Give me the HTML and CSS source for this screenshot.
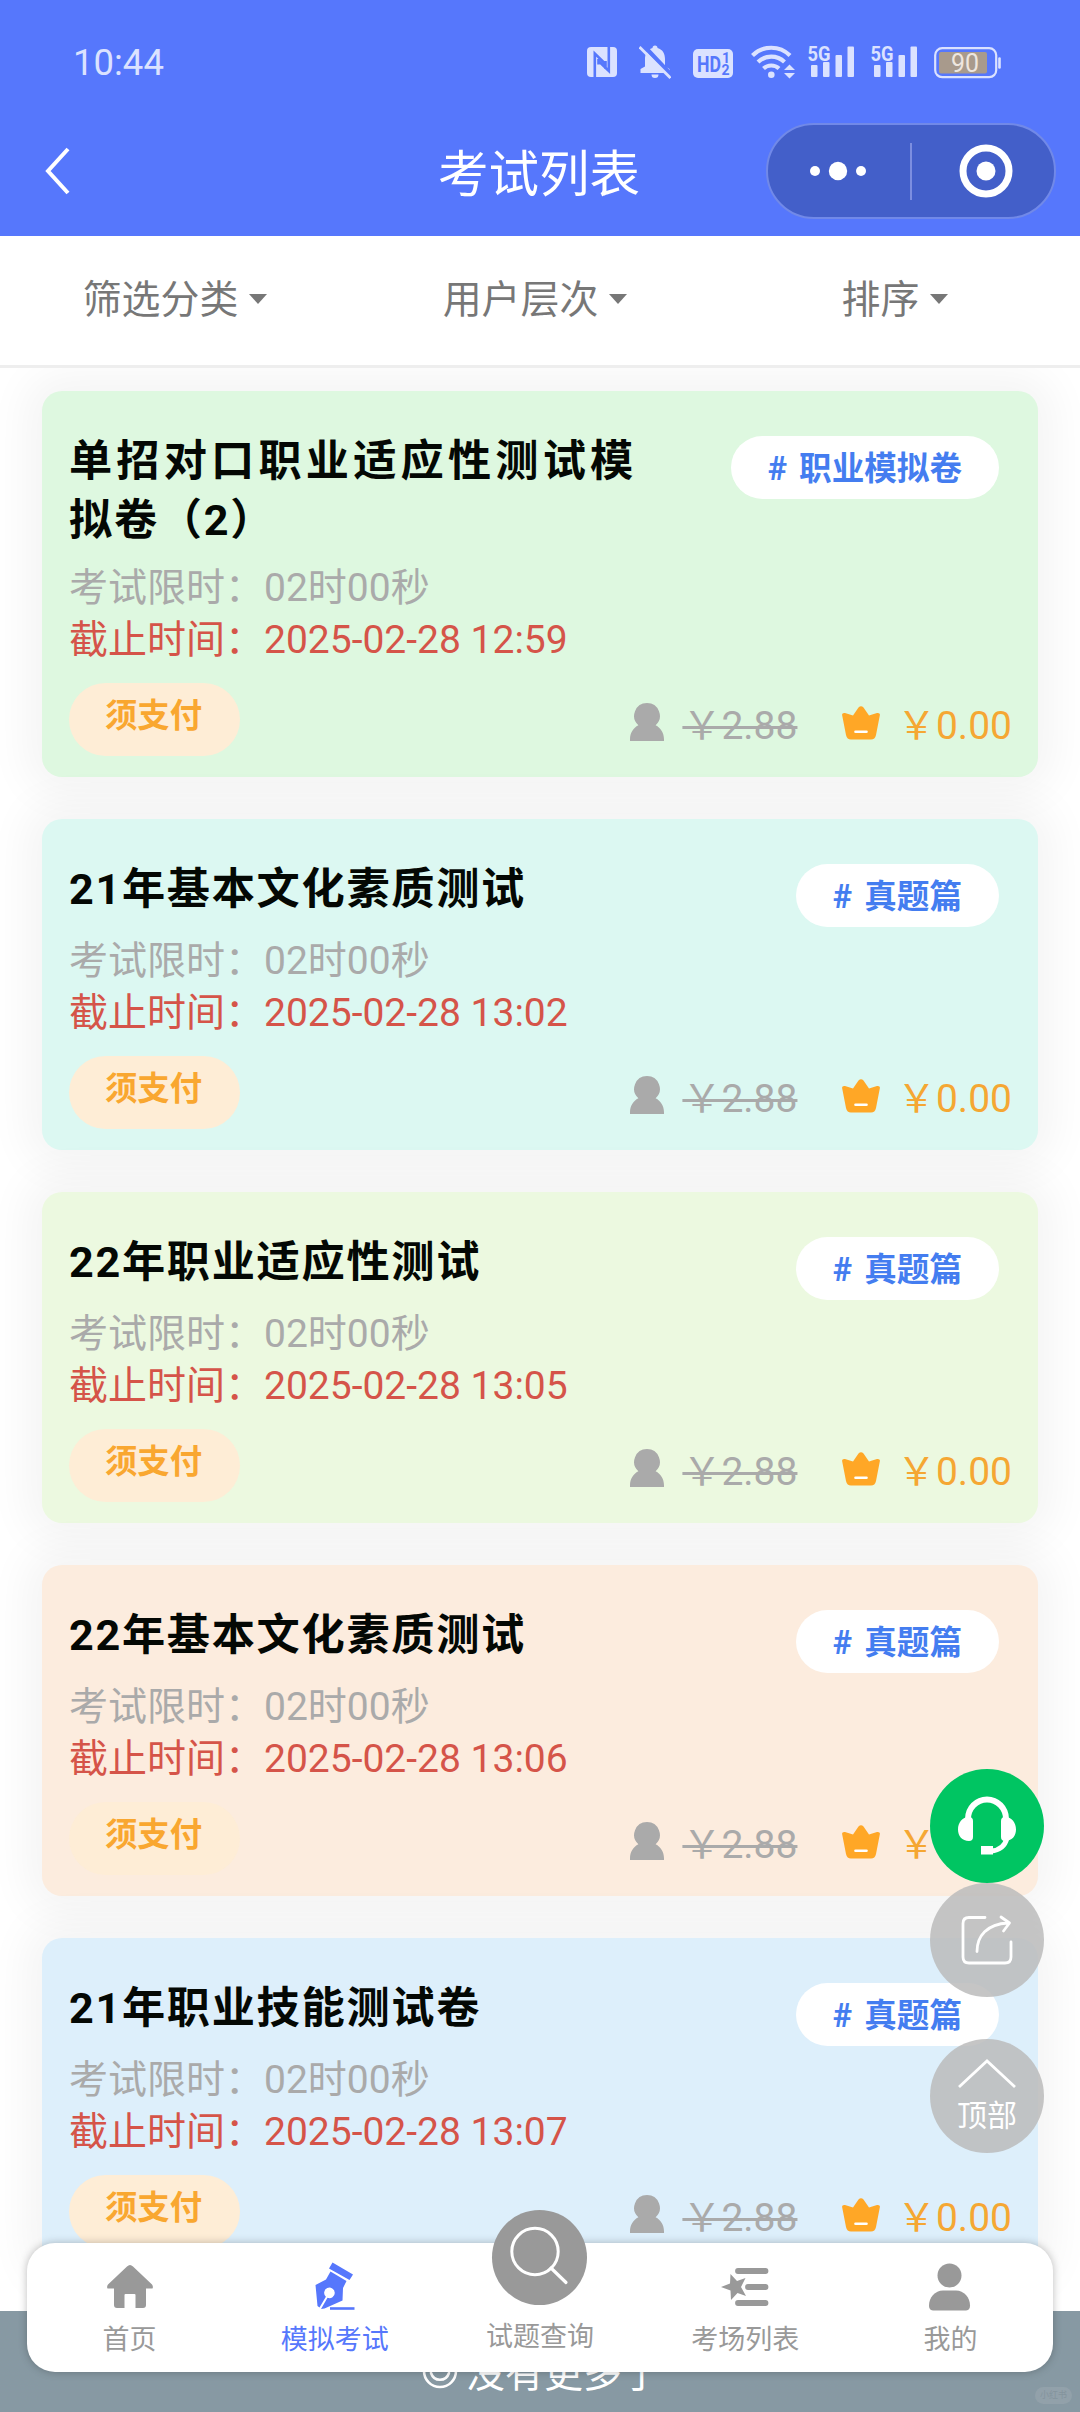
FILE: index.html
```html
<!DOCTYPE html>
<html lang="zh-CN">
<head>
<meta charset="utf-8">
<title>考试列表</title>
<link rel="stylesheet" href="styles.css">
</head>
<body>
<svg class="sprite" aria-hidden="true">
  <symbol id="user" viewBox="0 0 34 38"><path fill="currentColor" d="M17 0a12.8 12.8 0 0 1 8.6 22.3C30.800 25 34 30 34 36.200V38H0v-1.800C0 30 3.200 25 8.400 22.300A12.800 12.800 0 0 1 17 0z"/></symbol>
  <symbol id="crown" viewBox="0 0 38 34"><path fill="#ffa726" d="M16.500 1.500Q19 -1 21.500 1.500L27 9.500 35 7Q38.500 6.500 37.800 9.500L34 29Q33 33.500 29 33.500H9Q5 33.500 4 29L.2 9.500Q-.5 6.500 3 7L11 9.500z"/><path stroke="#fff" stroke-width="2.600" stroke-linecap="round" d="M13.500 25.800h11"/></symbol>
  <symbol id="bars" viewBox="0 0 46 34"><g fill="#dbe2ff"><rect x="3" y="21" width="6.500" height="12" rx="1"/><rect x="15" y="18" width="6.500" height="15" rx="1"/><rect x="27.500" y="11" width="6.500" height="22" rx="1"/><rect x="39.500" y="2.500" width="6.500" height="30.500" rx="1"/></g></symbol>
</svg>

<header class="header">
  <div class="status">
    <span class="clock">10:44</span>
    <div class="status-icons">
      <svg width="30" height="30" viewBox="0 0 30 30"><rect width="30" height="30" rx="4" fill="#dbe2ff"/><path d="M7.800 30V6.500L18.500 17M21.800 0v24L11.500 14M11.500 12v5.500M18.500 14v8" fill="none" stroke="#5677fc" stroke-width="2.600"/></svg>
      <svg class="i-bell" width="32" height="34" viewBox="0 0 32 34"><path fill="#dbe2ff" d="M13.500 3a2.500 2.500 0 0 1 5 0C24 4.500 26 9 26 14v7.500l4.500 2.500v4h-29v-4L6 21.500V14c0-5 2-9.500 7.500-11zM12.500 29.500h7a3.500 3.500 0 0 1-7 0z"/><path stroke="#5677fc" stroke-width="4.500" d="M3-1l31 33"/><path stroke="#dbe2ff" stroke-width="2.800" d="M.5 2l31 31"/></svg>
      <svg class="i-hd" width="40" height="29" viewBox="0 0 40 29"><rect width="40" height="29" rx="5" fill="#dbe2ff"/><text class="svg-hd" x="4" y="22.500" textLength="24" lengthAdjust="spacingAndGlyphs">HD</text><text class="svg-num" x="29" y="14">1</text><text class="svg-num" x="28.500" y="26">2</text></svg>
      <svg class="i-wifi" width="44" height="35" viewBox="0 0 44 35"><g fill="none" stroke="#dbe2ff" stroke-width="4.200"><path d="M1.500 11.500a26.500 26.500 0 0 1 37.500 0"/><path d="M7 18a19 19 0 0 1 26.500 0"/><path d="M12.500 24.500a11.500 11.500 0 0 1 15.500 0"/></g><circle cx="20.300" cy="30.800" r="3.300" fill="#dbe2ff"/><path fill="#dbe2ff" d="M33 26l5.500-5.500L44 26zM33 29l5.500 5.500L44 29z"/></svg>
      <svg class="i-sig" width="47" height="38" viewBox="-1 -4 47 38"><use href="#bars" width="46" height="34"/><text class="svg-5g" x="-.5" y="17" textLength="23" lengthAdjust="spacingAndGlyphs">5G</text></svg>
      <svg class="i-sig" width="47" height="38" viewBox="-1 -4 47 38"><use href="#bars" width="46" height="34"/><text class="svg-5g" x="-.5" y="17" textLength="23" lengthAdjust="spacingAndGlyphs">5G</text></svg>
      <svg class="i-bat" width="68" height="32" viewBox="0 0 68 32"><rect x="1.200" y="1.200" width="61" height="29" rx="7" fill="none" stroke="#dbe2ff" stroke-width="2.200"/><rect x="5" y="5" width="48" height="21.500" rx="2" fill="#a89a8c"/><path d="M65.500 11.500v9" stroke="#dbe2ff" stroke-width="2.600" stroke-linecap="round"/><text class="svg-bat" x="17" y="25" textLength="28" lengthAdjust="spacingAndGlyphs">90</text></svg>
    </div>
  </div>
  <div class="titlebar">
    <svg class="back" width="26" height="48" viewBox="0 0 26 48"><path d="M24 2L4 24l20 22" fill="none" stroke="#fff" stroke-width="4"/></svg>
    <h1>考试列表</h1>
    <div class="capsule">
      <svg width="56" height="20" viewBox="0 0 56 20"><g fill="#fff"><circle cx="5" cy="10" r="5"/><circle cx="28" cy="10" r="9.200"/><circle cx="51" cy="10" r="5"/></g></svg>
      <span class="capsule-line"></span>
      <svg width="54" height="54" viewBox="0 0 54 54"><circle cx="27" cy="27" r="23" fill="none" stroke="#fff" stroke-width="7"/><circle cx="27" cy="27" r="9.500" fill="#fff"/></svg>
    </div>
  </div>
</header>

<nav class="filters">
  <span class="filter">筛选分类<i></i></span>
  <span class="filter">用户层次<i></i></span>
  <span class="filter">排序<i></i></span>
</nav>

<main class="list">
  <article class="card green">
    <div class="top"><h2>单招对口职业适应性测试模拟卷（2）</h2><span class="tag"># 职业模拟卷</span></div>
    <p>考试限时：02时00秒</p><p class="deadline">截止时间：2025-02-28 12:59</p>
    <div class="bottom"><span class="pay">须支付</span><div class="prices"><svg class="user"><use href="#user"/></svg><s>￥2.88</s><svg class="crown"><use href="#crown"/></svg><b>￥0.00</b></div></div>
  </article>
  <article class="card teal">
    <div class="top"><h2>21年基本文化素质测试</h2><span class="tag"># 真题篇</span></div>
    <p>考试限时：02时00秒</p><p class="deadline">截止时间：2025-02-28 13:02</p>
    <div class="bottom"><span class="pay">须支付</span><div class="prices"><svg class="user"><use href="#user"/></svg><s>￥2.88</s><svg class="crown"><use href="#crown"/></svg><b>￥0.00</b></div></div>
  </article>
  <article class="card lime">
    <div class="top"><h2>22年职业适应性测试</h2><span class="tag"># 真题篇</span></div>
    <p>考试限时：02时00秒</p><p class="deadline">截止时间：2025-02-28 13:05</p>
    <div class="bottom"><span class="pay">须支付</span><div class="prices"><svg class="user"><use href="#user"/></svg><s>￥2.88</s><svg class="crown"><use href="#crown"/></svg><b>￥0.00</b></div></div>
  </article>
  <article class="card orange">
    <div class="top"><h2>22年基本文化素质测试</h2><span class="tag"># 真题篇</span></div>
    <p>考试限时：02时00秒</p><p class="deadline">截止时间：2025-02-28 13:06</p>
    <div class="bottom"><span class="pay">须支付</span><div class="prices"><svg class="user"><use href="#user"/></svg><s>￥2.88</s><svg class="crown"><use href="#crown"/></svg><b>￥0.00</b></div></div>
  </article>
  <article class="card blue">
    <div class="top"><h2>21年职业技能测试卷</h2><span class="tag"># 真题篇</span></div>
    <p>考试限时：02时00秒</p><p class="deadline">截止时间：2025-02-28 13:07</p>
    <div class="bottom"><span class="pay">须支付</span><div class="prices"><svg class="user"><use href="#user"/></svg><s>￥2.88</s><svg class="crown"><use href="#crown"/></svg><b>￥0.00</b></div></div>
  </article>
</main>

<footer class="nomore">
  <svg width="36" height="36" viewBox="0 0 36 36"><g fill="none" stroke="#fff" stroke-width="2.600" stroke-linecap="round"><circle cx="18" cy="18" r="16"/><path d="M9 20c3 9 15 9 18 0M11 12v2M25 12v2"/></g></svg>
  <span>没有更多了</span>
  <small class="mark">小红书</small>
</footer>

<aside class="fabs">
  <div class="fab service"><svg width="58" height="60" viewBox="0 0 58 60"><path d="M10 24v-1a19 19.500 0 0 1 38 0v1" fill="none" stroke="#fff" stroke-width="6"/><path fill="#fff" d="M11 21C4 21 0 27 0 33.500S4 45 11 45q4 0 4-4V25q0-4-4-4zM47 21c7 0 11 6 11 12.500S54 45 47 45q-4 0-4-4V25q0-4 4-4z"/><path d="M49 42c-2 8-8 12.500-16 13" fill="none" stroke="#fff" stroke-width="5"/><rect x="23" y="50" width="12" height="8.500" fill="#fff"/></svg></div>
  <div class="fab share"><svg width="52" height="52" viewBox="0 0 52 52"><g fill="none" stroke="#fff" stroke-width="2.800" stroke-linecap="round" stroke-linejoin="round"><path d="M24 3.500H8q-6 0-6 6V43q0 6 6 6h36q6 0 6-6V28M16 37.500C16 22 26 10 47 9M40 3l8.500 6-6 8"/></g></svg></div>
  <div class="fab to-top"><svg width="60" height="30" viewBox="0 0 60 30"><path d="M2 28L30 2l28 26" fill="none" stroke="#fff" stroke-width="2.800"/></svg><span>顶部</span></div>
</aside>

<nav class="tabbar">
  <a class="tab"><svg width="46" height="44" viewBox="0 0 46 44"><path fill="#999" d="M20 1.500q3-3 6 0L45 19.500q1.500 2 .5 4H39V40q0 3-3 3h-7.500V30q0-1-1-1h-9q-1 0-1 1v13H10q-3 0-3-3V23.500H.5q-1-2 .5-4z"/></svg><span>首页</span></a>
  <a class="tab active"><svg width="40" height="49" viewBox="0 0 40 49"><path fill="#5677fc" d="M17.500 .5l20.500 12-3.500 5.500L14 6.500zM15.500 9.500L31.500 19 28 26l-.5 12.500L9.500 46.500l-3.500.500 6.500-11.200a5.300 5.300 0 1 0-1.600-1L4.500 45.500 2.500 44 .5 23 11 17.500z"/><path stroke="#5677fc" stroke-width="2.600" d="M15 46.500h24.500"/></svg><span>模拟考试</span></a>
  <a class="tab middle"><div class="search"><svg width="95" height="95" viewBox="0 0 95 95"><circle cx="43" cy="41.500" r="23.200" fill="none" stroke="#fff" stroke-width="3"/><path d="M59 58l15 14.500" stroke="#fff" stroke-width="3.200" stroke-linecap="round"/></svg></div><span>试题查询</span></a>
  <a class="tab"><svg width="48" height="38" viewBox="0 0 48 38"><path d="M17 3h27.500M27 19h17.500M17 35h27.500" stroke="#999" stroke-width="5.800" stroke-linecap="round"/><path fill="#999" d="M0 19l9-3.500.5-9.500 6.500 7 8.500-3L20 19l5 9-8.500-3L10 32l-.5-9.500z"/></svg><span>考场列表</span></a>
  <a class="tab"><svg width="42" height="48" viewBox="0 0 42 48"><g fill="#999"><circle cx="20.500" cy="12.500" r="12"/><path d="M14 27.500h13c8 0 14 7 14 15 0 4-2 5-5 5H5c-3 0-5-1-5-5 0-8 6-15 14-15z"/></g></svg><span>我的</span></a>
</nav>
</body>
</html>
```
FILE: styles.css
```css
* { box-sizing: border-box; }
body {
  margin: 0;
  width: 1080px;
  height: 2412px;
  position: relative;
  overflow: hidden;
  display: flex;
  flex-direction: column;
  background: #fff;
  font-family: Roboto, "Noto Sans CJK SC", sans-serif;
}
h1, h2, p { margin: 0; }
svg { display: block; flex: none; }
.sprite { position: absolute; width: 0; height: 0; }

.header { height: 236px; flex: none; background: #5677fc; color: #fff; position: relative; z-index: 2; }
.status { height: 123px; display: flex; justify-content: space-between; align-items: flex-start; padding: 41px 78px 0 73px; }
.clock { font-size: 36.5px; line-height: 44px; color: #dbe2ff; }
.status-icons { display: flex; align-items: flex-start; padding-top: 6px; }
.i-bell { margin: -2px 0 0 22px; }
.i-hd { margin: 2px 0 0 22px; }
.i-wifi { margin: -3px 0 0 18px; }
.i-sig { margin: -7px 0 0 12px; }
.i-sig + .i-sig { margin-left: 16px; }
.i-bat { margin: 0 0 0 17px; }
.svg-5g { font: 700 21px Roboto, sans-serif; fill: #dbe2ff; }
.svg-hd { font: 700 22px Roboto, sans-serif; fill: #5677fc; }
.svg-num { font: 700 14px Roboto, sans-serif; fill: #5677fc; }
.svg-bat { font: 400 26px Roboto, sans-serif; fill: #eee6df; }

.titlebar { height: 96px; display: grid; grid-template-columns: 1fr auto 1fr; align-items: center; padding: 0 24px 0 44px; }
h1 { width: 204px; font-size: 50.5px; font-weight: 400; line-height: 88px; padding-top: 8px; margin-left: -10px; margin-right: 10px; white-space: nowrap; }
.capsule { justify-self: end; width: 290px; height: 96px; border: 2px solid #7189e8; border-radius: 48px; background: #435fc9; display: flex; align-items: center; padding: 0 41px 0 42px; }
.capsule-line { width: 2px; height: 57px; margin: 0 47px 0 44px; background: #7c8ee0; }

.filters { height: 132px; flex: none; background: #fff; border-bottom: 3px solid #eee; display: grid; grid-template-columns: repeat(3, 360px); position: relative; z-index: 2; }
.filter { display: flex; justify-content: center; align-items: center; padding: 0 10px 9px 0; font-size: 38.9px; color: #777; gap: 11px; }
.filter i { border: 9.500px solid transparent; border-top: 10px solid #777; border-bottom: 0; margin-top: 5px; }

.list { display: flex; flex-direction: column; gap: 42px; padding: 23px 42px 42px; }
.card { border-radius: 20px; padding: 41px 26px 21px 27px; box-shadow: 0 0 42px 18px rgba(0, 0, 0, .043); }
.green { background: #def8e0; }
.teal { background: #dcf8f2; }
.lime { background: #ecf9e0; }
.orange { background: #fcecde; }
.blue { background: #ddeffb; }
.top { display: flex; justify-content: space-between; align-items: flex-start; min-height: 75px; padding-right: 13px; }
h2 { width: 566px; padding-bottom: 12px; font-size: 43.2px; font-weight: 700; line-height: 59px; letter-spacing: 1.700px; text-align: justify; color: #040804; }
.tag { height: 63px; margin-top: 4px; padding: 2px 37px 0; border-radius: 32px; background: #fff; color: #447df0; font-size: 32.6px; font-weight: 700; line-height: 62px; white-space: pre; word-spacing: 4px; }
.card p { font-size: 39px; line-height: 52px; color: #aaa; }
.card .deadline { color: #d55449; }
.bottom { display: flex; justify-content: space-between; margin-top: 17px; }
.pay { width: 171px; height: 73px; border-radius: 37px; background: #feedd6; color: #f9a730; text-align: center; font-size: 32.4px; font-weight: 700; line-height: 66px; padding-right: 2px; }
.prices { display: flex; align-items: center; padding-top: 13px; font-size: 39px; line-height: 52px; }
.prices s { color: #aaa; margin-left: 18px; text-decoration-thickness: 3px; }
.prices b { color: #f5a733; font-weight: 400; margin-left: 17px; }
.user { width: 34px; height: 38px; color: #aaa; margin-top: -9px; }
.crown { width: 38px; height: 34px; margin: -7px 0 0 44.500px; }

.nomore { height: 101px; flex: none; position: relative; z-index: 1; background: #8799a3; color: #fff; display: flex; justify-content: center; align-items: flex-start; gap: 8px; padding: 42px 0 0 3px; font-size: 39px; line-height: 36px; }
.nomore span { line-height: 42px; }
.mark { position: absolute; right: 8px; bottom: 8px; width: 37px; height: 17px; border-radius: 9px; background: #92a1aa; color: #84949d; font-size: 9px; line-height: 17px; text-align: center; }

.fabs { position: absolute; z-index: 3; left: 930px; top: 1769px; display: flex; flex-direction: column; color: #fff; }
.fab { width: 114px; height: 114px; border-radius: 50%; background: rgba(187, 187, 187, .86); display: flex; flex-direction: column; justify-content: center; align-items: center; }
.service { background: #00c562; }
.to-top { margin-top: 42px; justify-content: flex-start; padding-top: 20px; font-size: 30px; line-height: 53px; }

.tabbar { position: absolute; z-index: 3; left: 27px; top: 2243px; width: 1026px; height: 129px; border-radius: 28px; background: #fff; box-shadow: 0 0 8px rgba(0, 0, 0, .25); display: grid; grid-template-columns: repeat(5, 1fr); grid-template-rows: 129px; color: #999; }
.tab { height: 129px; display: flex; flex-direction: column; align-items: center; justify-content: flex-end; padding-bottom: 14px; font-size: 27px; }
.tab span { line-height: 36px; }
.tab svg { margin: auto; position: relative; top: 4px; }
.middle { padding-bottom: 17px; }
.active { color: #5677fc; }
.search { width: 95px; height: 95px; flex: none; margin-bottom: 14px; border-radius: 50%; background: #999; }
.search svg { top: 0; }
```
